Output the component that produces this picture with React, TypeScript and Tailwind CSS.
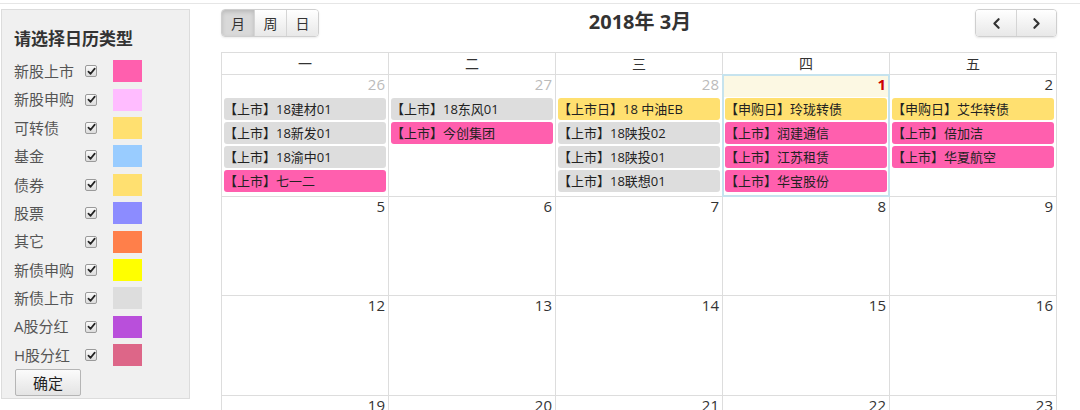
import { ChevronLeft, ChevronRight } from "lucide-react";

const legend = [
  { label: "新股上市", color: "bg-[#ff5fae]" },
  { label: "新股申购", color: "bg-[#ffbcff]" },
  { label: "可转债", color: "bg-[#ffe070]" },
  { label: "基金", color: "bg-[#99ccff]" },
  { label: "债券", color: "bg-[#ffe070]" },
  { label: "股票", color: "bg-[#8c8cff]" },
  { label: "其它", color: "bg-[#ff7f4a]" },
  { label: "新债申购", color: "bg-[#ffff00]" },
  { label: "新债上市", color: "bg-[#dddddd]" },
  { label: "A股分红", color: "bg-[#b94fdb]" },
  { label: "H股分红", color: "bg-[#dd6688]" },
];

const weekdays = ["一", "二", "三", "四", "五"];

type Ev = { text: string; kind: "gray" | "pink" | "yellow" };

const evColor: Record<Ev["kind"], string> = {
  gray: "bg-[#dddddd]",
  pink: "bg-[#ff5fae]",
  yellow: "bg-[#ffe070]",
};

const firstWeek: { day: number; other?: boolean; today?: boolean; events: Ev[] }[] = [
  {
    day: 26,
    other: true,
    events: [
      { text: "【上市】18建材01", kind: "gray" },
      { text: "【上市】18新发01", kind: "gray" },
      { text: "【上市】18渝中01", kind: "gray" },
      { text: "【上市】七一二", kind: "pink" },
    ],
  },
  {
    day: 27,
    other: true,
    events: [
      { text: "【上市】18东风01", kind: "gray" },
      { text: "【上市】今创集团", kind: "pink" },
    ],
  },
  {
    day: 28,
    other: true,
    events: [
      { text: "【上市日】18 中油EB", kind: "yellow" },
      { text: "【上市】18陕投02", kind: "gray" },
      { text: "【上市】18陕投01", kind: "gray" },
      { text: "【上市】18联想01", kind: "gray" },
    ],
  },
  {
    day: 1,
    today: true,
    events: [
      { text: "【申购日】玲珑转债", kind: "yellow" },
      { text: "【上市】润建通信", kind: "pink" },
      { text: "【上市】江苏租赁", kind: "pink" },
      { text: "【上市】华宝股份", kind: "pink" },
    ],
  },
  {
    day: 2,
    events: [
      { text: "【申购日】艾华转债", kind: "yellow" },
      { text: "【上市】倍加洁", kind: "pink" },
      { text: "【上市】华夏航空", kind: "pink" },
    ],
  },
];

const laterWeeks = [
  { h: "h-[99px]", days: [5, 6, 7, 8, 9] },
  { h: "h-[100px]", days: [12, 13, 14, 15, 16] },
  { h: "h-[100px]", days: [19, 20, 21, 22, 23] },
];

function Check() {
  return (
    <span className="flex h-[12px] w-[12px] items-center justify-center rounded-[2px] border border-[#9a9a9a] bg-gradient-to-b from-[#fafafa] to-[#dcdcdc]">
      <svg viewBox="0 0 10 10" className="h-[9px] w-[9px]">
        <path d="M1.6 5.2 L4 7.6 L8.6 1.8" fill="none" stroke="#222" strokeWidth="1.9" strokeLinecap="round" strokeLinejoin="round" />
      </svg>
    </span>
  );
}

export default function App() {
  const cjk = "font-['Open_Sans','Noto_Sans_CJK_SC',sans-serif]";
  return (
    <div className={`relative h-[410px] w-[1080px] overflow-hidden bg-white ${cjk}`}>
      <div className="mt-[3px] border-t border-[#e6e6e6]" />
      <div className="mt-[5px] flex">
        {/* Sidebar */}
        <div className="ml-[1px] flex h-[390px] w-[189px] flex-col border border-[#dcdcdc] bg-[#f0f0f0] pl-[12px]">
          <div className="mt-[17px] text-[17px] font-bold leading-[24px] text-[#333]">请选择日历类型</div>
          <div className="mt-[6px] flex flex-col">
            {legend.map((l) => (
              <div key={l.label} className="flex h-[28.4px] items-center">
                <span className="w-[71px] text-[15px] text-[#555]">{l.label}</span>
                <Check />
                <span className={`ml-[16px] h-[22px] w-[29px] ${l.color}`} />
              </div>
            ))}
          </div>
          <button className="ml-[1px] h-[27px] w-[66px] rounded-[2px] border border-[#b5b5b5] bg-gradient-to-b from-[#fbfbfb] to-[#e4e4e4] text-[15px] text-[#222]">
            确定
          </button>
        </div>

        {/* Calendar */}
        <div className="ml-[31px] w-[836px]">
          <div className="flex h-[28px] items-center justify-between">
            <div className="flex h-[28px] overflow-hidden rounded-[4px] border border-[#cfcfcf] text-[14px] text-[#333] shadow-[0_1px_2px_rgba(0,0,0,0.08)]">
              <span className="flex w-[32px] items-center justify-center bg-[#d9d9d9] shadow-[inset_0_2px_4px_rgba(0,0,0,0.15)]">月</span>
              <span className="flex w-[32px] items-center justify-center border-l border-[#d5d5d5] bg-gradient-to-b from-white to-[#e8e8e8]">周</span>
              <span className="flex w-[32px] items-center justify-center border-l border-[#d5d5d5] bg-gradient-to-b from-white to-[#e8e8e8]">日</span>
            </div>
            <div className="mb-[2px] mr-[14px] text-[20px] font-bold text-[#333]">2018年 3月</div>
            <div className="flex h-[28px] overflow-hidden rounded-[4px] border border-[#cfcfcf] text-[#333] shadow-[0_1px_2px_rgba(0,0,0,0.1)]">
              <span className="flex w-[40px] items-center justify-center bg-gradient-to-b from-white to-[#e8e8e8]">
                <ChevronLeft size={17} strokeWidth={3} />
              </span>
              <span className="flex w-[40px] items-center justify-center border-l border-[#d5d5d5] bg-gradient-to-b from-white to-[#e8e8e8]">
                <ChevronRight size={17} strokeWidth={3} />
              </span>
            </div>
          </div>

          <div className="mt-[15px] border-l border-t border-[#dddddd]">
            <div className="grid h-[22px] grid-cols-5">
              {weekdays.map((w) => (
                <div key={w} className="flex items-center justify-center border-b border-r border-[#dddddd] text-[14px] text-[#333]">
                  {w}
                </div>
              ))}
            </div>
            <div className="grid h-[122px] grid-cols-5">
              {firstWeek.map((c) => (
                <div key={c.day} className="relative border-b border-r border-[#dddddd]">
                  <div
                    className={`h-[22px] pr-[3px] text-right text-[15px] leading-[19px] ${
                      c.today ? "bg-[#fcf8e3] font-bold text-[#cc0000]" : c.other ? "text-[#bbbbbb]" : "text-[#333]"
                    }`}
                  >
                    {c.day}
                  </div>
                  <div className="flex flex-col gap-[2px] px-[2px] pt-[1px]">
                    {c.events.map((e) => (
                      <div
                        key={e.text}
                        className={`h-[22px] truncate rounded-[3px] text-[13px] leading-[22px] text-[#222] ${evColor[e.kind]}`}
                      >
                        {e.text}
                      </div>
                    ))}
                  </div>
                  {c.today && (
                    <div className="pointer-events-none absolute -left-[1px] -top-[1px] bottom-[-1px] right-[-1px] border-2 border-[#c6e3ee]" />
                  )}
                </div>
              ))}
            </div>
            {laterWeeks.map((wk) => (
              <div key={wk.days[0]} className={`grid grid-cols-5 ${wk.h}`}>
                {wk.days.map((d) => (
                  <div key={d} className="border-b border-r border-[#dddddd]">
                    <div className="h-[22px] pr-[3px] text-right text-[15px] leading-[19px] text-[#333]">{d}</div>
                  </div>
                ))}
              </div>
            ))}
          </div>
        </div>
      </div>
    </div>
  );
}
